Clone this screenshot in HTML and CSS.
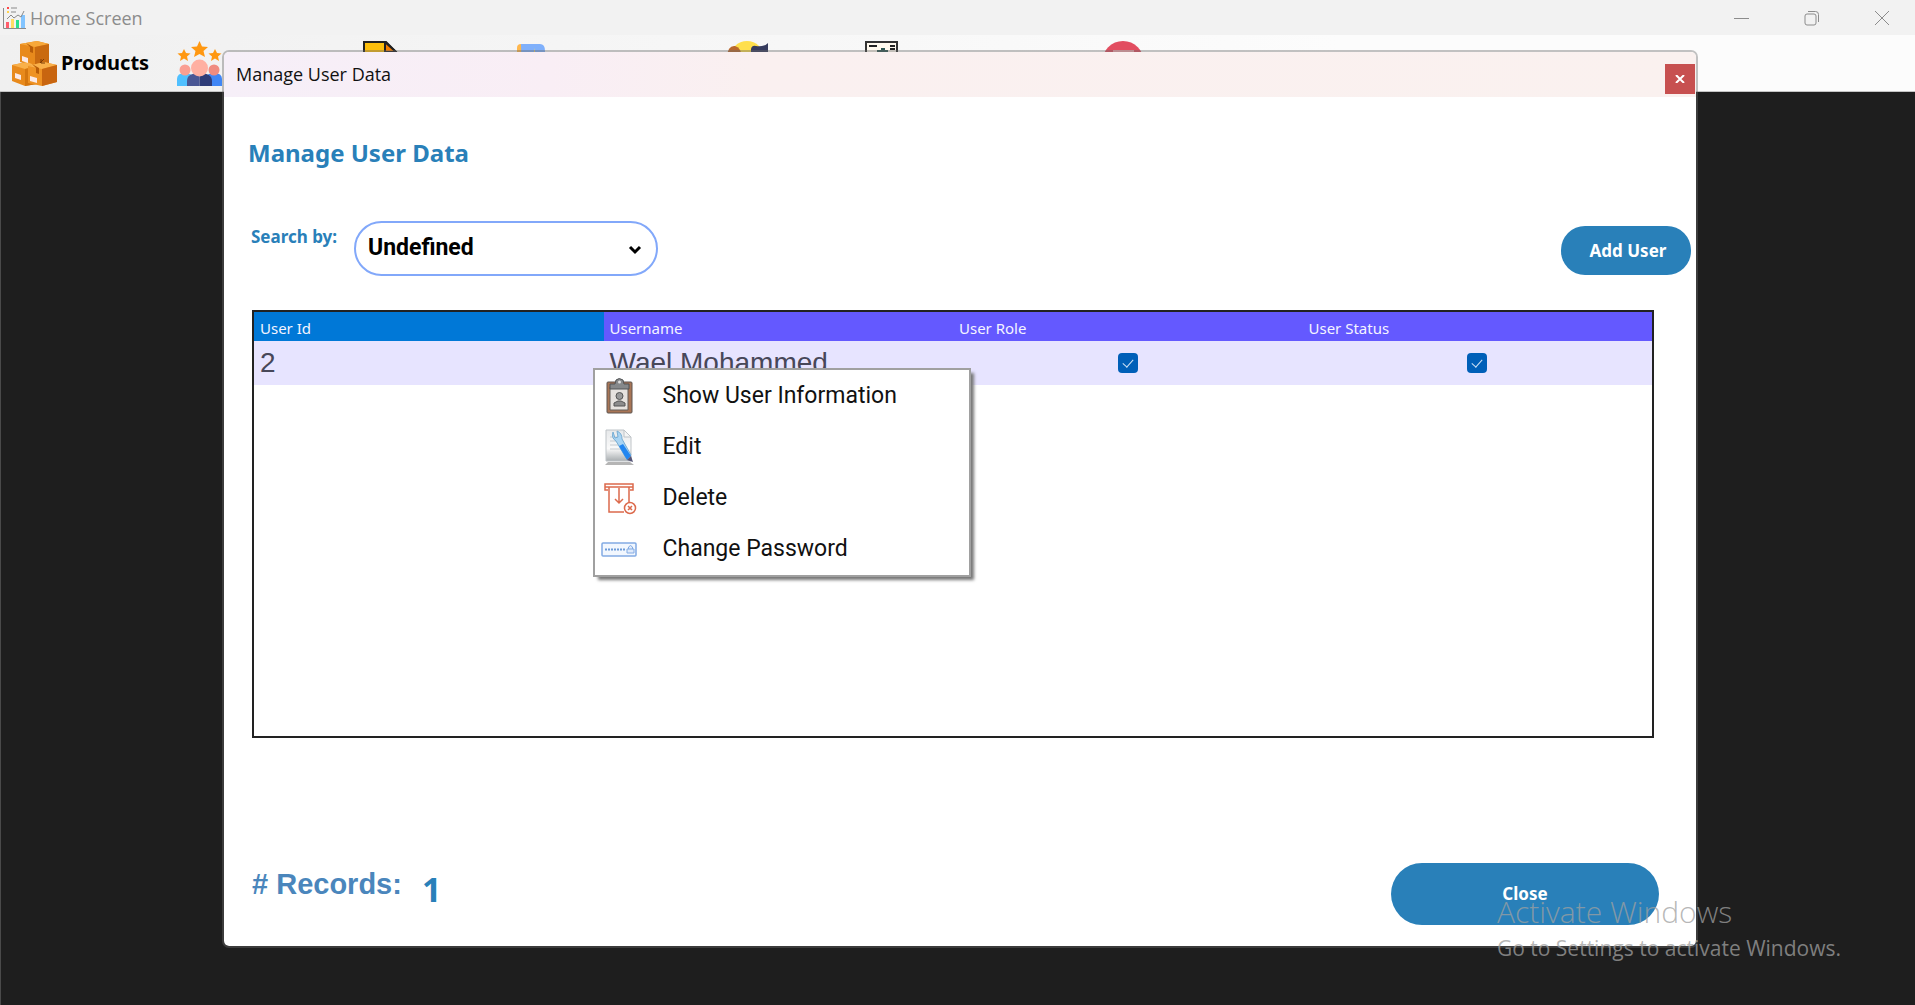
FILE: index.html
```html
<!DOCTYPE html>
<html lang="en">
<head>
<meta charset="utf-8">
<title>Home Screen</title>
<link rel="stylesheet" href="styles.css">
</head>
<body>
<header class="titlebar">
  <svg class="app-icon" viewBox="0 0 24 24" aria-hidden="true">
    <path d="M1.500 2v20.500H24" fill="none" stroke="#8a8a8a"/>
    <path d="M4 16h3v6H4z" fill="#ff5d6c"/><path d="M9 13h3v9H9z" fill="#ffdc64"/><path d="M14 14h3v8h-3z" fill="#2be08a"/><path d="M19 9h4v13h-4z" fill="#82c4ff"/>
    <path d="M5 13l4-4 3 3 4-3 3 2 3-6" fill="none" stroke="#8a8a8a"/>
    <path d="M5 1h2v2H5z" fill="#ff4646"/><path d="M5 5h2v2H5z" fill="#ffd24d"/><path d="M9 2h6M9 6h5" stroke="#8a8a8a"/>
  </svg>
  <span class="app-name">Home Screen</span>
  <button class="win-btn" aria-label="Minimize"><svg viewBox="0 0 16 16"><path d="M0 8.500h15"/></svg></button>
  <button class="win-btn" aria-label="Restore"><svg viewBox="0 0 16 16"><rect x="1" y="4" width="11" height="11" rx="2"/><path d="M4 1.500h7.500a3 3 0 0 1 3 3V12"/></svg></button>
  <button class="win-btn" aria-label="Close"><svg viewBox="0 0 16 16"><path d="M1 1l14 14M15 1L1 15"/></svg></button>
</header>
<nav class="toolbar">
  <button class="tool"><svg class="tool-icon" viewBox="0 0 45 45" aria-hidden="true">
    <path d="M8 3l17-3 12 3v20l-14 3L8 21z" fill="#e88a1c"/><path d="M8 3l17-3 12 3-14 3z" fill="#f7a83a"/><path d="M23 6l14-3v20l-14 3z" fill="#c96a10"/>
    <path d="M0 24l15-3 10 4v18l-12 2L0 40z" fill="#e88a1c"/><path d="M0 24l15-3 10 4-12 3z" fill="#f9b04a"/><path d="M13 28l12-3v18l-12 2z" fill="#d4760f"/>
    <path d="M16 25l16-4 13 3v17l-15 4-14-3z" fill="#ee9224"/><path d="M16 25l16-4 13 3-15 4z" fill="#f9b04a"/><path d="M30 28l15-4v17l-15 4z" fill="#c86510"/>
    <path d="M10 15l6 2v5l-6-2zM3 32l6 2v5l-6-2zM18 35l7 2v5l-7-2z" fill="#fbe9e6"/><path d="M14 2l4 4v5l3 1V6M20 23l4 4v5l3 1v-6" fill="#b85c08"/><path d="M28 22l4-4M29 18v4h4" stroke="#7c3a04" fill="none"/>
  </svg><span>Products</span></button>
  <button class="tool" aria-label="Customers"><svg class="tool-icon" viewBox="0 0 45 45" aria-hidden="true">
    <path d="M22.500 0l2.500 5.500 6 .5-4.500 4 1.500 6-5.500-3-5.500 3 1.500-6-4.500-4 6-.5z" fill="#ff9811"/>
    <path d="M7 8l2 4 4.500.5-3.500 3 1 4.500-4-2.500L3 20l1-4.500-3.500-3L5 12zM38 8l2 4 4.500.5-3.500 3 1 4.500-4-2.500-4 2.500 1-4.500-3.500-3L36 12z" fill="#ff9811"/>
    <path d="M0 45V38q0-6 8-6t8 6v7z" fill="#50c0ff"/><path d="M29 45v-7q0-6 8-6t8 6v7z" fill="#4086f5"/>
    <circle cx="8" cy="29" r="5.500" fill="#fa9f92"/><circle cx="37" cy="29" r="5.500" fill="#f08c80"/>
    <path d="M10 45v-5q0-8 12.500-8V45z" fill="#4a5794"/><path d="M22.500 45V32Q35 32 35 40v5z" fill="#2e3c78"/>
    <circle cx="22.500" cy="27" r="8.500" fill="#ffb0a2"/>
  </svg></button>
  <button class="tool" aria-label="Notes"><svg class="tool-icon" viewBox="0 0 45 45" aria-hidden="true"><path d="M1 1h22l10 10v32H1z" fill="#fdbf0c" stroke="#222" stroke-width="2"/><path d="M22 1v10h11z" fill="#f57c00" stroke="#222" stroke-width="2"/></svg></button>
  <button class="tool" aria-label="Orders"><svg class="tool-icon" viewBox="0 0 45 45" aria-hidden="true"><path d="M0 42V7q0-4 4-4h4v39z" fill="#ffb74d"/><path d="M4 3h19q5 0 5 7v32H5z" fill="#7fb0fb"/><path d="M17 7l1 4h4l-3 3 1 4-3-2z" fill="#ffd54f"/></svg></button>
  <button class="tool" aria-label="People"><svg class="tool-icon" viewBox="0 0 45 45" aria-hidden="true"><circle cx="20" cy="17" r="17" fill="#ffdf4d"/><path d="M0 22Q-1 4 8 5q8 2 7 17z" fill="#b9692e"/><path d="M3 22q0-10 5-10t5 10z" fill="#7a3d3c"/><path d="M24 20V8q1-4 5-3 9 1 12-3v10l-3 10z" fill="#363b5e"/><path d="M27 20q1-10 9-9v9z" fill="#805963"/></svg></button>
  <button class="tool" aria-label="Reports"><svg class="tool-icon" viewBox="0 0 45 45" aria-hidden="true"><path d="M1 1h31v42H1z" fill="#fff9ee" stroke="#333" stroke-width="2"/><path d="M4 5h8M25 5h5M25 8h5" stroke="#222" stroke-width="2"/><path d="M9 13v-2h3V9h4V7h4v2h3v3h2v14H9z" fill="#2e5552"/></svg></button>
  <button class="tool" aria-label="Exit"><svg class="tool-icon" viewBox="0 0 45 45" aria-hidden="true"><circle cx="20" cy="21" r="21" fill="#e24d60"/><path d="M10 9h21v20H10z" fill="#f3a5ac"/></svg></button>
</nav>
<main class="desktop"></main>

<section class="dialog" role="dialog" aria-labelledby="dlg-title">
  <header class="dialog-bar">
    <span id="dlg-title">Manage User Data</span>
    <button class="dialog-x" aria-label="Close dialog"><svg viewBox="0 0 10 8"><path d="M1 0l8 8M9 0L1 8"/></svg></button>
  </header>
  <h1 class="heading">Manage User Data</h1>
  <div class="search-row">
    <label class="search-label" for="search-by">Search by:</label>
    <div class="select-box">
      <select id="search-by"><option>Undefined</option></select>
      <svg class="chevron" viewBox="0 0 14 10" aria-hidden="true"><path d="M2 2l5 5 5-5"/></svg>
    </div>
    <button class="btn btn-add">Add User</button>
  </div>
  <div class="grid">
    <table>
      <thead><tr><th class="active">User Id</th><th>Username</th><th>User Role</th><th>User Status</th></tr></thead>
      <tbody><tr>
        <td>2</td><td>Wael Mohammed</td>
        <td class="check"><input type="checkbox" aria-label="User Role" checked></td>
        <td class="check"><input type="checkbox" aria-label="User Status" checked></td>
      </tr></tbody>
    </table>
    <div class="menu" role="menu">
      <button class="menu-item" role="menuitem"><svg viewBox="0 0 36 36" aria-hidden="true"><rect x="6" y="4" width="25" height="31" rx="1" fill="#a87556" stroke="#5d5550"/><path d="M9 9h18v23H9z" fill="#e7e3df" stroke="#655e58"/><path d="M9 11V6h5l1-4q3-3 7 0l1 4h5v5z" fill="#85888a" stroke="#515456"/><circle cx="18.500" cy="4" r="1.500" fill="#ddd"/><circle cx="18.500" cy="18" r="3.500" fill="#999" stroke="#555"/><path d="M13 28v-3l4-2h3l4 2v3z" fill="#8c8c8c" stroke="#555"/></svg><span>Show User Information</span></button>
      <button class="menu-item" role="menuitem"><svg viewBox="0 0 36 36" aria-hidden="true"><defs><linearGradient id="pg" x2="0" y2="1"><stop stop-color="#e6e8ea"/><stop offset=".6" stop-color="#fafafa"/><stop offset="1" stop-color="#a8adb0"/></linearGradient></defs><path d="M4 36l3-3h22l4 3z" fill="#b5b5b5"/><path d="M5 1h18l7 7v24H5z" fill="url(#pg)" stroke="#bfc4c8"/><path d="M23 1v7h7z" fill="#f5f5f5" stroke="#bfc4c8"/><path d="M9 8h8M9 12h8M9 16h10M9 20h12" stroke="#c6cbd0"/><path d="M12 3q-2 6 3 9l10 17 5-3-9-16q0-6-5-8l1 6-3 1z" fill="#a9d4f3" stroke="#78aed4"/><path d="M18 17l4-2 8 12-4 4z" fill="#2386f0"/><path d="M26 31l4-4 2 6z" fill="#557"/></svg><span>Edit</span></button>
      <button class="menu-item" role="menuitem"><svg viewBox="0 0 36 36" aria-hidden="true" fill="none" stroke="#dc6a4c" stroke-width="1.500"><path d="M7 10H4V4h28v6h-3M4 7h28M8 7v25h15M28 7v16M18 8v15M14 19l4 4 4-4"/><circle cx="29" cy="28" r="5.500"/><path d="M27 26l4 4M31 26l-4 4"/></svg><span>Delete</span></button>
      <button class="menu-item" role="menuitem"><svg viewBox="0 0 36 36" aria-hidden="true"><rect x="1" y="12" width="34" height="13" rx="1" fill="#f2f7fe" stroke="#82abe3" stroke-width="1.500"/><path d="M4 18.500h20" stroke="#6d9bd8" stroke-width="2" stroke-dasharray="2 1"/><path d="M26 18h7v4h-7zM27.500 18v-2q2-3 4 0v2" fill="#dfeafb" stroke="#82abe3"/></svg><span>Change Password</span></button>
    </div>
  </div>
  <footer class="dialog-foot">
    <p class="records"><span># Records:</span><output class="count">1</output></p>
    <button class="btn btn-close">Close</button>
  </footer>
</section>

<aside class="watermark"><p class="wm-title">Activate Windows</p><p class="wm-text">Go to Settings to activate Windows.</p></aside>
</body>
</html>
```

FILE: styles.css
```css
* { box-sizing: border-box; }
body {
  margin: 0;
  min-height: 100vh;
  display: flex;
  flex-direction: column;
  position: relative;
  overflow: hidden;
  font-family: "Open Sans", sans-serif;
  background: #1e1e1e;
}
button { border: 0; padding: 0; background: none; font: inherit; color: inherit; }
p, h1 { margin: 0; }

.titlebar { display: flex; align-items: center; gap: 4px; height: 35px; padding-left: 2px; background: #f2f2f2; color: #8c8c8c; }
.app-icon { width: 24px; height: 24px; }
.app-name { margin-right: auto; font-size: 18px; line-height: 24px; }
.win-btn { width: 66px; height: 34px; display: flex; align-items: center; justify-content: center; }
.win-btn svg { width: 16px; height: 16px; fill: none; stroke: #8c8c8c; }

.toolbar {
  display: grid;
  grid-template-columns: 165px 186px 154px 210px 138px 238px 1fr;
  align-items: center;
  height: 57px;
  padding-left: 12px;
  background: linear-gradient(90deg, #f0f0f0, #fcfcfc 70%);
  border-bottom: 1px solid #c4c4c4;
}
.tool { display: flex; align-items: center; gap: 4px; font: bold 20px/24px "Noto Sans", sans-serif; color: #000; }
.tool-icon { width: 45px; height: 45px; flex: none; }

.desktop { flex: 1; border-left: 1px solid #4a4a4a; background: #1e1e1e; }

.dialog {
  position: absolute;
  inset: 50px 217px 57px 222px;
  display: flex;
  flex-direction: column;
  overflow: hidden;
  background: #fff padding-box;
  border: 2px solid rgba(105, 105, 105, .4);
  border-radius: 7px;
}
.dialog-bar {
  display: flex;
  align-items: center;
  justify-content: space-between;
  height: 45px;
  padding: 0 1px 0 12px;
  background: linear-gradient(90deg, #f6eff8, #f9eef5 22%, #faf0f0 36%, #faf1ef);
  color: #111;
  font-size: 18px;
  line-height: 24px;
}
.dialog-bar span { padding-bottom: 2px; }
.dialog-x { width: 30px; height: 30px; margin-top: 8px; background: #c75050; display: grid; place-items: center; }
.dialog-x svg { width: 10px; height: 8px; stroke: #fff; stroke-width: 2; }

.heading { padding: 40px 24px 52px; font: bold 24px/32px "Noto Sans", sans-serif; color: #2980b9; }

.search-row { display: flex; align-items: center; padding: 0 5px 0 27px; }
.search-label { width: 103px; padding-bottom: 24px; font: bold 17px/24px "Noto Sans", sans-serif; color: #2980b9; }
.select-box { position: relative; width: 304px; }
.select-box select {
  appearance: none;
  width: 100%;
  height: 55px;
  padding: 0 12px 2px;
  border: 2px solid #82a8fa;
  border-radius: 28px;
  background: #fff;
  color: #000;
  font: bold 23px/28px Roboto, sans-serif;
}
.chevron { position: absolute; right: 16px; top: 24px; width: 14px; height: 10px; fill: none; stroke: #000; stroke-width: 3; pointer-events: none; }

.btn { background: #2980b9; color: #fff; font: bold 17px/24px "Noto Sans", sans-serif; }
.btn-add { width: 130px; height: 49px; margin: 4px 0 0 auto; padding-left: 4px; border-radius: 24px; }
.btn-close { width: 268px; height: 62px; border-radius: 31px; }

.grid { position: relative; flex: 1; margin: 34px 42px 0 28px; border: 2px solid #222; }
table { width: 100%; border-collapse: collapse; table-layout: fixed; }
th { height: 29px; padding: 2px 6px 0; background: #6459ff; color: #f4f4ff; text-align: left; font: 15px/24px "Noto Sans", sans-serif; }
th.active { background: #0078d7; }
td { height: 44px; padding: 0 6px; background: #e7e4ff; color: #474759; font: 28px/32px "Liberation Sans", sans-serif; }
td.check { text-align: center; }
td input {
  appearance: none;
  display: block;
  width: 20px;
  height: 20px;
  margin: 0 auto;
  border-radius: 4px;
  background: #005fb8;
}
td input::after { content: ""; display: block; width: 5px; height: 9px; margin: 4px 7px; border: solid #cfe2f5; border-width: 0 1px 1px 0; transform: rotate(42deg); }

.menu {
  position: absolute;
  left: calc(25% - 11px);
  top: 56px;
  width: 378px;
  padding: 0 2px 1px 6px;
  border: 2px solid #a0a0a0;
  background: #fff;
  box-shadow: 4px 4px 3px -1px #777;
}
.menu-item { display: flex; align-items: center; gap: 26px; width: 100%; height: 51px; font: 23px/32px Roboto, sans-serif; color: #111; }
.menu-item svg { width: 36px; height: 36px; }

.dialog-foot { display: flex; justify-content: space-between; align-items: center; margin-top: 125px; padding: 0 37px 21px 28px; }
.records { display: flex; align-items: flex-start; gap: 20px; padding-bottom: 10px; font: bold 29px/40px "Liberation Sans", sans-serif; color: #4a86bc; }
.count { font: bold 34px/50px "Noto Sans", sans-serif; color: #2980b9; }

.watermark { position: absolute; right: 74px; bottom: 41px; color: rgba(160, 160, 160, .75); }
.wm-title { font-size: 30px; line-height: 40px; font-weight: 300; }
.wm-text { font-size: 21px; line-height: 32px; }
```
